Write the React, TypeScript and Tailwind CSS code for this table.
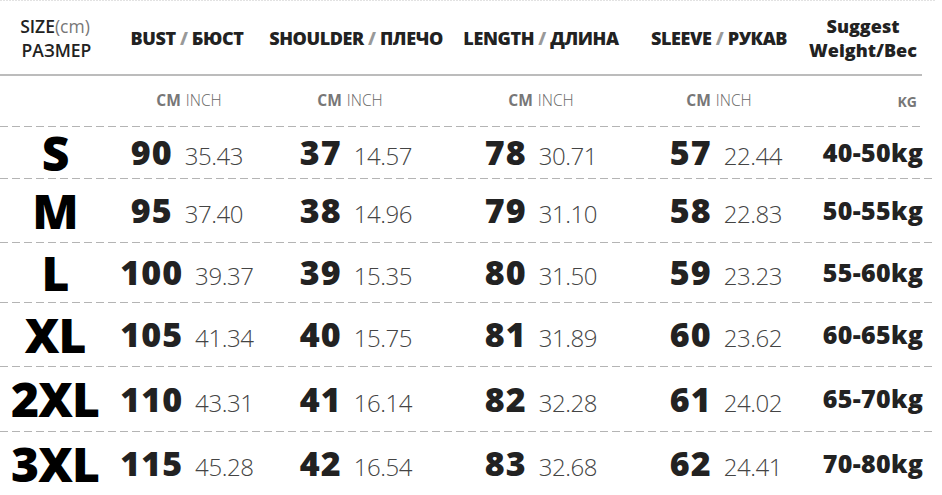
const rows = [
  { size: "S", h: "h-[51px]", bust: ["90", "35.43"], shoulder: ["37", "14.57"], length: ["78", "30.71"], sleeve: ["57", "22.44"], kg: "40-50kg" },
  { size: "M", h: "h-[63px]", bust: ["95", "37.40"], shoulder: ["38", "14.96"], length: ["79", "31.10"], sleeve: ["58", "22.83"], kg: "50-55kg" },
  { size: "L", h: "h-[59px]", bust: ["100", "39.37"], shoulder: ["39", "15.35"], length: ["80", "31.50"], sleeve: ["59", "23.23"], kg: "55-60kg" },
  { size: "XL", h: "h-[63px]", bust: ["105", "41.34"], shoulder: ["40", "15.75"], length: ["81", "31.89"], sleeve: ["60", "23.62"], kg: "60-65kg" },
  { size: "2XL", h: "h-[64px]", bust: ["110", "43.31"], shoulder: ["41", "16.14"], length: ["82", "32.28"], sleeve: ["61", "24.02"], kg: "65-70kg" },
  { size: "3XL", h: "h-[63px]", bust: ["115", "45.28"], shoulder: ["42", "16.54"], length: ["83", "32.68"], sleeve: ["62", "24.41"], kg: "70-80kg" },
]

const Dash = ({ w }: { w: string }) => (
  <div className={`h-px ${w} bg-[linear-gradient(to_right,#b4b4b4_8px,transparent_8px)] bg-[length:12px_1px]`} />
)

const Pair = ({ v }: { v: string[] }) => (
  <div className="flex items-baseline justify-center gap-[12px]">
    <span className="text-[34px] font-black text-[#222] tracking-[1px]">{v[0]}</span>
    <span className="text-[24px] font-light text-[#444] tracking-[-0.4px]">{v[1]}</span>
  </div>
)

const Unit = () => (
  <div className="flex justify-center gap-[5px] text-[15.5px]">
    <span className="font-bold text-[#777]">CM</span>
    <span className="font-light text-[#666]">INCH</span>
  </div>
)

const App = () => {
  return (
    <div className="w-[942px] h-[495px] bg-white overflow-hidden" style={{ fontFamily: "'Open Sans', 'Liberation Sans', sans-serif" }}>
      <div className="h-px w-[936px] bg-[linear-gradient(to_right,#e2e2e2_2px,transparent_2px)] bg-[length:3px_1px]" />

      {/* header */}
      <div className="flex h-[73px] items-center text-[#222] leading-[24px]">
        <div className="w-[110px] flex flex-col items-center text-[17.5px]">
          <div className="font-semibold">SIZE<span className="font-normal text-[#777]">(cm)</span></div>
          <div className="font-semibold pl-[3px]">РАЗМЕР</div>
        </div>
        <div className="w-[154px] text-center text-[18px] font-extrabold tracking-[-0.4px]">BUST <span className="text-[#999]">/</span> БЮСТ</div>
        <div className="w-[184px] text-center text-[18px] font-extrabold tracking-[-0.4px]">SHOULDER <span className="text-[#999]">/</span> ПЛЕЧО</div>
        <div className="w-[186px] text-center text-[18px] font-extrabold tracking-[-0.4px]">LENGTH <span className="text-[#999]">/</span> ДЛИНА</div>
        <div className="w-[170px] text-center text-[18px] font-extrabold tracking-[-0.4px]">SLEEVE <span className="text-[#999]">/</span> РУКАВ</div>
        <div className="w-[138px] pr-[20px] flex flex-col items-center text-[18px] font-extrabold">
          <div>Suggest</div>
          <div>Weight/Вес</div>
        </div>
      </div>
      <div className="h-[2px] w-[922px] bg-[#bcbcbc]" />

      {/* units */}
      <div className="flex h-[50px] items-center">
        <div className="w-[110px]" />
        <div className="w-[154px] pl-[4px]"><Unit /></div>
        <div className="w-[184px] pr-[12px]"><Unit /></div>
        <div className="w-[186px]"><Unit /></div>
        <div className="w-[170px]"><Unit /></div>
        <div className="w-[138px] pr-[25px] text-right text-[14px] font-bold text-[#777]">KG</div>
      </div>

      {rows.map((r, i) => (
        <div key={r.size}>
          <Dash w={i === 0 ? "w-[922px]" : "w-[936px]"} />
          <div className={`flex items-center ${r.h}`}>
            <div className="w-[110px] text-center text-[48px] font-black text-black leading-[40px] tracking-[-1px]">{r.size}</div>
            <div className="w-[154px]"><Pair v={r.bust} /></div>
            <div className="w-[184px]"><Pair v={r.shoulder} /></div>
            <div className="w-[186px]"><Pair v={r.length} /></div>
            <div className="w-[170px] pl-[14px]"><Pair v={r.sleeve} /></div>
            <div className="w-[138px] text-center text-[25px] font-extrabold text-[#222] tracking-[0.3px]">{r.kg}</div>
          </div>
        </div>
      ))}
    </div>
  )
}

export default App
